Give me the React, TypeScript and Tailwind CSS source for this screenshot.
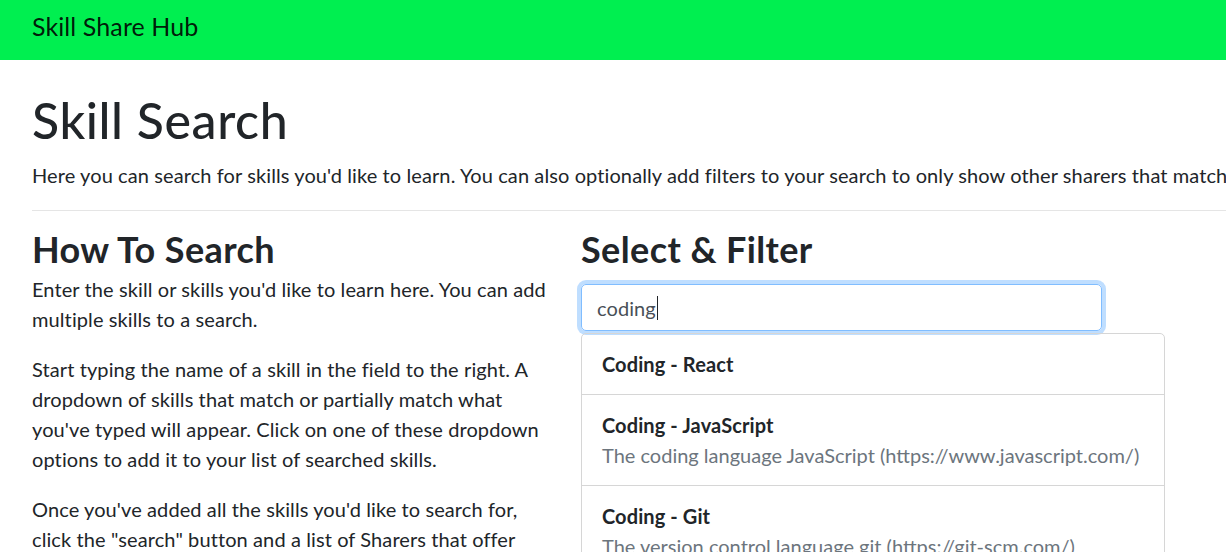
import React from 'react';

const skills = [
  { name: 'Coding - React', description: '' },
  { name: 'Coding - JavaScript', description: 'The coding language JavaScript (https://www.javascript.com/)' },
  { name: 'Coding - Git', description: 'The version control language git (https://git-scm.com/)' },
];

const App: React.FC = () => {
  return (
    <div className="h-[552px] w-[1226px] overflow-hidden bg-white text-[#212529] font-['Lato','Liberation_Sans',sans-serif]">
      {/* Navbar */}
      <nav className="h-[60px] bg-[#00ef50] px-[32px] pt-[8px]">
        <span className="text-[25px] leading-[37px] tracking-[0.1px] text-black/90">Skill Share Hub</span>
      </nav>

      <div className="pl-[32px]">
        <h1 className="mt-[30px] text-[50px] leading-[60px] tracking-[0.6px] font-medium">Skill Search</h1>
        <p className="mt-[10px] whitespace-nowrap text-[20px] leading-[30px] tracking-[0.1px]">
          Here you can search for skills you'd like to learn. You can also optionally add filters to your search to only show other sharers that match your criteria.
        </p>
        <hr className="mt-[20px] border-0 border-t border-black/10" />

        <div className="mt-[17px] flex">
          {/* Left column */}
          <div className="w-[549px] shrink-0 text-[20px] leading-[30px] tracking-[0.1px]">
            <h3 className="text-[36px] leading-[43px] tracking-[0.4px] font-bold">How To Search</h3>
            <p className="mt-[3px]">
              Enter the skill or skills you'd like to learn here. You can add
              <br />
              multiple skills to a search.
            </p>
            <p className="mt-[20px]">
              Start typing the name of a skill in the field to the right. A
              <br />
              dropdown of skills that match or partially match what
              <br />
              you've typed will appear. Click on one of these dropdown
              <br />
              options to add it to your list of searched skills.
            </p>
            <p className="mt-[20px]">
              Once you've added all the skills you'd like to search for,
              <br />
              click the "search" button and a list of Sharers that offer
              <br />
              these skills will be shown.
            </p>
          </div>

          {/* Right column */}
          <div className="w-[584px] shrink-0">
            <h3 className="text-[36px] leading-[43px] tracking-[0.4px] font-bold">Select &amp; Filter</h3>
            <div className="mt-[13px] w-[521px] h-[47px] rounded-[5px] border border-[#80bdff] shadow-[0_0_0_4px_rgba(0,123,255,0.25)] flex items-center pl-[15px] text-[20px] tracking-[0.1px] text-[#495057]">
              <span>coding</span>
              <span className="ml-[1px] h-[24px] w-[1px] bg-[#212529]" />
            </div>
            <div className="mt-[2px] rounded-t-[5px] border border-[#d6d6d6]">
              {skills.map((skill, i) => (
                <div
                  key={skill.name}
                  className={`px-[20px] py-[15px] text-[20px] leading-[30px] whitespace-nowrap ${i > 0 ? 'border-t border-[#d6d6d6]' : ''}`}
                >
                  <div className="font-bold tracking-[0.1px]">{skill.name}</div>
                  {skill.description && <div className="text-[#6c757d]">{skill.description}</div>}
                </div>
              ))}
            </div>
          </div>
        </div>
      </div>
    </div>
  );
};

export default App;
